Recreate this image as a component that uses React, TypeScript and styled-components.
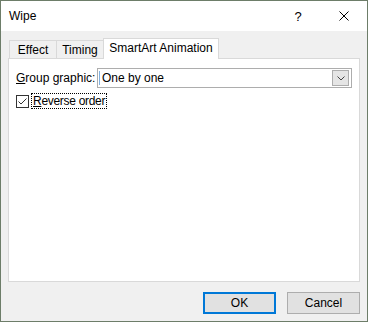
import React from "react";
import styled, { createGlobalStyle } from "styled-components";

const GlobalStyle = createGlobalStyle`
  html, body {
    margin: 0;
    padding: 0;
    background: #f0f0f0;
  }
  body {
    font-family: "Liberation Sans", Arial, sans-serif;
    font-size: 12px;
    color: #000;
  }
`;

const Window = styled.div`
  box-sizing: border-box;
  width: 368px;
  height: 322px;
  border: 1px solid #6d7d69;
  background: #f0f0f0;
  display: flex;
  flex-direction: column;
`;

const TitleBar = styled.div`
  height: 30px;
  background: #fff;
  display: flex;
  align-items: center;
`;

const Title = styled.span`
  flex: 1;
  padding-left: 8px;
  font-size: 12px;
`;

const CaptionButton = styled.div`
  width: 46px;
  height: 30px;
  display: flex;
  align-items: center;
  justify-content: center;
  font-size: 13px;
`;

const Body = styled.div`
  flex: 1;
  display: flex;
  flex-direction: column;
  padding: 7px;
`;

const TabRow = styled.div`
  height: 20px;
  display: flex;
  align-items: flex-end;
  padding-left: 1px;
`;

const Tab = styled.div<{ $active?: boolean; $width: number }>`
  box-sizing: border-box;
  width: ${(p) => p.$width}px;
  height: ${(p) => (p.$active ? 21 : 18)}px;
  margin-bottom: ${(p) => (p.$active ? -1 : 0)}px;
  margin-right: -1px;
  border: 1px solid #d9d9d9;
  border-bottom: none;
  background: ${(p) => (p.$active ? "#fff" : "#f0f0f0")};
  position: relative;
  z-index: ${(p) => (p.$active ? 1 : 0)};
  display: flex;
  align-items: center;
  justify-content: center;
  padding-bottom: ${(p) => (p.$active ? 2 : 0)}px;
`;

const Panel = styled.div`
  box-sizing: border-box;
  height: 224px;
  background: #fff;
  border: 1px solid #d9d9d9;
  padding: 9px 7px;
  display: flex;
  flex-direction: column;
  gap: 5px;
`;

const Row = styled.div`
  display: flex;
  align-items: center;
`;

const Label = styled.span`
  width: 81px;
`;

const Combo = styled.div`
  box-sizing: border-box;
  flex: 1;
  height: 20px;
  border: 1px solid #adadad;
  display: flex;
  align-items: center;
  padding-left: 1px;
`;

const Caret = styled.span`
  width: 1px;
  height: 14px;
  background: #7fb0e0;
  margin-right: 2px;
`;

const ComboText = styled.span`
  flex: 1;
`;

const DropButton = styled.div`
  box-sizing: border-box;
  width: 17px;
  height: 16px;
  margin-right: 2px;
  border: 1px solid #adadad;
  background: #e5e5e5;
  display: flex;
  align-items: center;
  justify-content: center;
`;

const CheckBox = styled.div`
  box-sizing: border-box;
  width: 13px;
  height: 13px;
  border: 1px solid #333;
  background: #fff;
  display: flex;
  align-items: center;
  justify-content: center;
`;

const FocusLabel = styled.span`
  margin-left: 2px;
  padding: 0 1px;
  height: 14px;
  line-height: 14px;
  letter-spacing: -0.3px;
  border: 1px dotted #000;
`;

const ButtonRow = styled.div`
  margin-top: 10px;
  display: flex;
  justify-content: flex-end;
  gap: 11px;
`;

const Button = styled.div<{ $default?: boolean }>`
  box-sizing: border-box;
  width: 73px;
  height: 22px;
  background: #e1e1e1;
  border: ${(p) => (p.$default ? "2px solid #0078d7" : "1px solid #adadad")};
  display: flex;
  align-items: center;
  justify-content: center;
`;

export default function App() {
  return (
    <>
      <GlobalStyle />
      <Window>
        <TitleBar>
          <Title>Wipe</Title>
          <CaptionButton>?</CaptionButton>
          <CaptionButton>
            <svg width="10" height="10" viewBox="0 0 10 10">
              <path d="M0.5 0.5 L9.5 9.5 M9.5 0.5 L0.5 9.5" stroke="#000" strokeWidth="1" fill="none" />
            </svg>
          </CaptionButton>
        </TitleBar>
        <Body>
          <TabRow>
            <Tab $width={48}>Effect</Tab>
            <Tab $width={48}>Timing</Tab>
            <Tab $width={116} $active>SmartArt Animation</Tab>
          </TabRow>
          <Panel>
            <Row>
              <Label>
                <u>G</u>roup graphic:
              </Label>
              <Combo>
                <Caret />
                <ComboText>One by one</ComboText>
                <DropButton>
                  <svg width="8" height="5" viewBox="0 0 8 5">
                    <path d="M0.5 0.5 L4 4 L7.5 0.5" stroke="#444" strokeWidth="1" fill="none" />
                  </svg>
                </DropButton>
              </Combo>
            </Row>
            <Row>
              <CheckBox>
                <svg width="11" height="11" viewBox="0 0 11 11">
                  <path d="M1.5 5.5 L4 8 L9.5 2.5" stroke="#333" strokeWidth="1" fill="none" />
                </svg>
              </CheckBox>
              <FocusLabel>
                <u>R</u>everse order
              </FocusLabel>
            </Row>
          </Panel>
          <ButtonRow>
            <Button $default>OK</Button>
            <Button>Cancel</Button>
          </ButtonRow>
        </Body>
      </Window>
    </>
  );
}
